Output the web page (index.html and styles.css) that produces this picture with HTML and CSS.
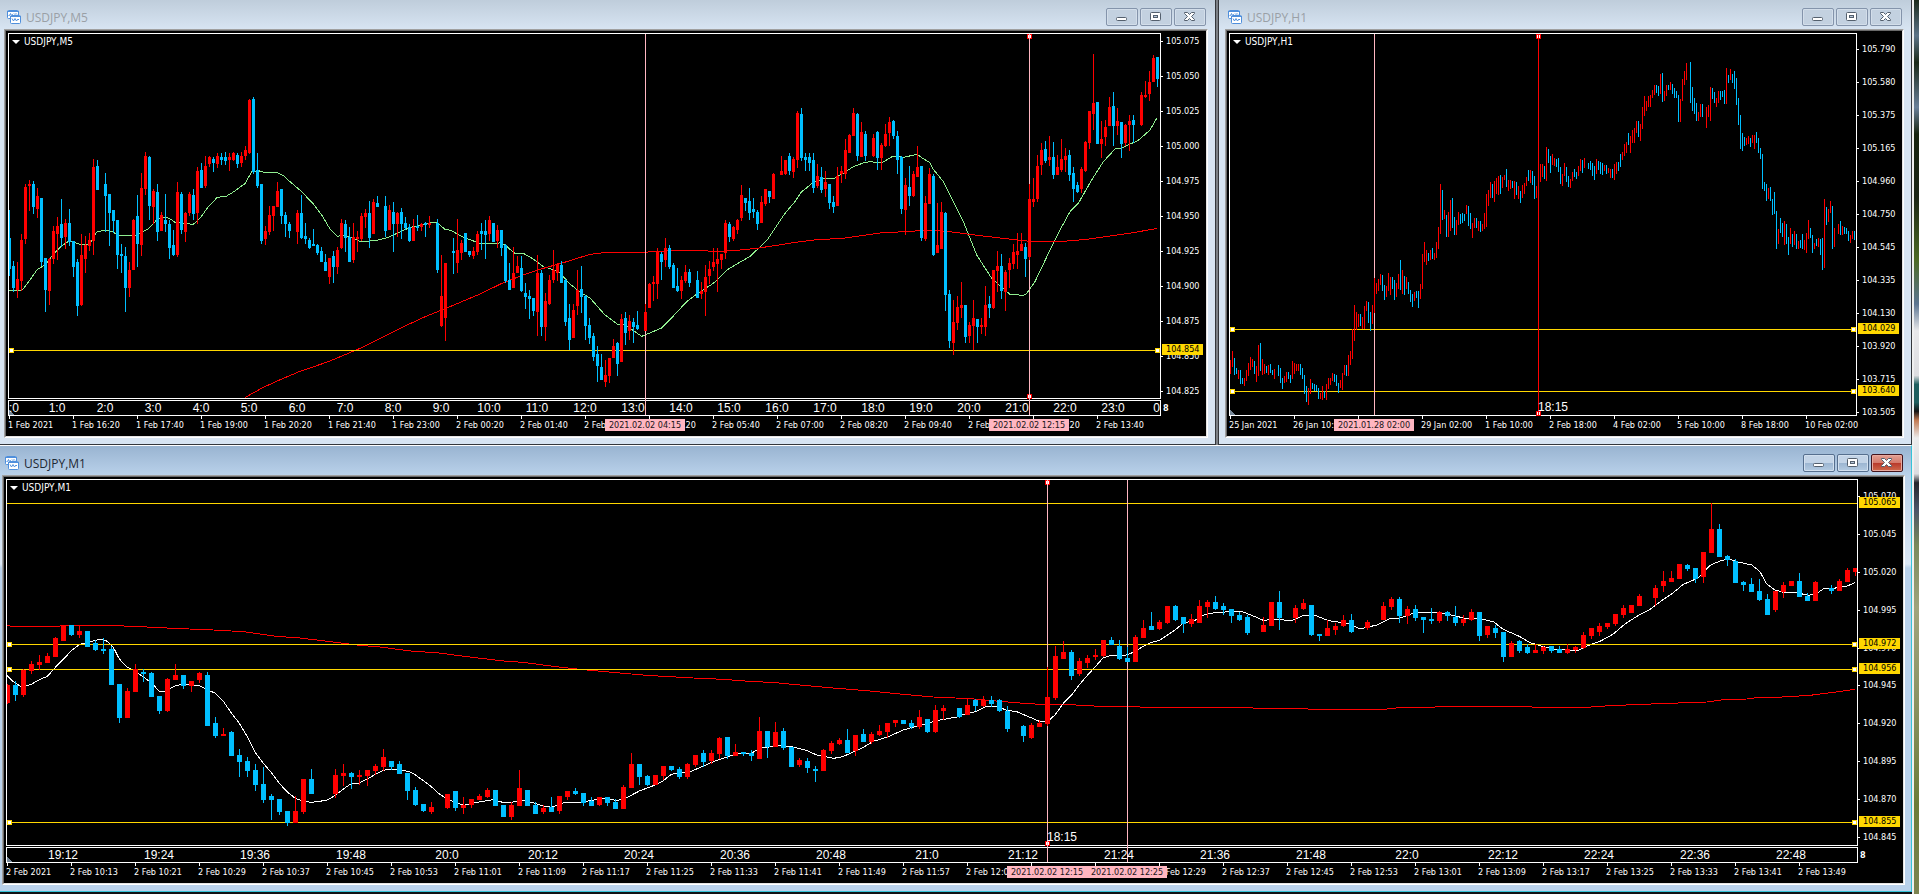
FILE: index.html
```html
<!DOCTYPE html>
<html lang="en">
<head>
<meta charset="utf-8">
<title>USDJPY charts</title>
<link rel="stylesheet" href="styles.css">
</head>
<body>
<svg class="defs" aria-hidden="true">
  <symbol id="icon-chart" viewBox="0 0 14 14">
    <rect x="0.5" y="0.5" width="11" height="8" rx="1" fill="#fff" stroke="#4f8fdc"/>
    <path d="M0 1.5h12" stroke="#4f8fdc"/>
    <path d="M1.5 5.5h1l1-2 1 2 1-1 1 1M7 3.5l1 1 1-1 1 1" fill="none" stroke="#4f8fdc"/>
    <rect x="3.5" y="5.5" width="10" height="8" rx="1" fill="#fff" stroke="#4f8fdc"/>
    <path d="M3 6.5h11" stroke="#4f8fdc"/>
    <path d="M5 8.500l1.500 2.500 1.500-2.500 1.500 2.500 1.500-2 1 1" fill="none" stroke="#4f8fdc"/>
  </symbol>
  <symbol id="icon-min" viewBox="0 0 14 12">
    <rect x="1.5" y="6.5" width="10" height="3" rx="1" fill="#fff" stroke="#54606e"/>
  </symbol>
  <symbol id="icon-max" viewBox="0 0 14 12">
    <rect x="1.5" y="1.5" width="10" height="8" rx="1" fill="#fff" stroke="#54606e"/>
    <rect x="4.5" y="4.5" width="4" height="2" fill="#b8c8da" stroke="#54606e"/>
  </symbol>
  <symbol id="icon-close" viewBox="0 0 14 12">
    <path d="M1.5 1.5h3l2 2 2-2h3v1L8.500 5.500l3 3v1h-3l-2-2-2 2h-3v-1l3-3-3-3z" fill="#fff" stroke="#54606e"/>
  </symbol>
</svg>

<main class="desktop">
  <section class="window m5">
    <header class="titlebar">
      <svg class="app-icon" aria-hidden="true"><use href="#icon-chart"/></svg>
      <h1 class="caption">USDJPY,M5</h1>
      <div class="controls">
        <button type="button" aria-label="Minimize"><svg><use href="#icon-min"/></svg></button>
        <button type="button" aria-label="Restore"><svg><use href="#icon-max"/></svg></button>
        <button type="button" aria-label="Close"><svg><use href="#icon-close"/></svg></button>
      </div>
    </header>
    <div class="client">
      <div class="chart" data-chart="m5">
        <div class="plot">
          <svg class="series" preserveAspectRatio="none"></svg>
          <p class="symbol">USDJPY,M5</p>
          <div class="hours">
            <span>:0</span><span>1:0</span><span>2:0</span><span>3:0</span><span>4:0</span><span>5:0</span><span>6:0</span><span>7:0</span><span>8:0</span><span>9:0</span><span>10:0</span><span>11:0</span><span>12:0</span><span>13:0</span><span>14:0</span><span>15:0</span><span>16:0</span><span>17:0</span><span>18:0</span><span>19:0</span><span>20:0</span><span>21:0</span><span>22:0</span><span>23:0</span><span>0</span>
          </div>
        </div>
        <div class="prices">
          <span>105.075</span><span>105.050</span><span>105.025</span><span>105.000</span><span>104.975</span><span>104.950</span><span>104.925</span><span>104.900</span><span>104.875</span><span>104.850</span><span>104.825</span>
        </div>
        <div class="price-tags"><b class="scale-mark">8</b></div>
        <div class="times">
          <span>1 Feb 2021</span><span>1 Feb 16:20</span><span>1 Feb 17:40</span><span>1 Feb 19:00</span><span>1 Feb 20:20</span><span>1 Feb 21:40</span><span>1 Feb 23:00</span><span>2 Feb 00:20</span><span>2 Feb 01:40</span><span>2 Feb 03:00</span><span>2 Feb 04:20</span><span>2 Feb 05:40</span><span>2 Feb 07:00</span><span>2 Feb 08:20</span><span>2 Feb 09:40</span><span>2 Feb 11:00</span><span>2 Feb 12:20</span><span>2 Feb 13:40</span>
        </div>
      </div>
    </div>
  </section>

  <section class="window h1">
    <header class="titlebar">
      <svg class="app-icon" aria-hidden="true"><use href="#icon-chart"/></svg>
      <h1 class="caption">USDJPY,H1</h1>
      <div class="controls">
        <button type="button" aria-label="Minimize"><svg><use href="#icon-min"/></svg></button>
        <button type="button" aria-label="Restore"><svg><use href="#icon-max"/></svg></button>
        <button type="button" aria-label="Close"><svg><use href="#icon-close"/></svg></button>
      </div>
    </header>
    <div class="client">
      <div class="chart" data-chart="h1">
        <div class="plot">
          <svg class="series" preserveAspectRatio="none"></svg>
          <p class="symbol">USDJPY,H1</p>
        </div>
        <div class="prices">
          <span>105.790</span><span>105.580</span><span>105.375</span><span>105.165</span><span>104.960</span><span>104.750</span><span>104.545</span><span>104.335</span><span>104.130</span><span>103.920</span><span>103.715</span><span>103.505</span>
        </div>
        <div class="price-tags"></div>
        <div class="times">
          <span>25 Jan 2021</span><span>26 Jan 10:00</span><span></span><span>29 Jan 02:00</span><span>1 Feb 10:00</span><span>2 Feb 18:00</span><span>4 Feb 02:00</span><span>5 Feb 10:00</span><span>8 Feb 18:00</span><span>10 Feb 02:00</span>
        </div>
      </div>
    </div>
  </section>

  <section class="window m1 active">
    <header class="titlebar">
      <svg class="app-icon" aria-hidden="true"><use href="#icon-chart"/></svg>
      <h1 class="caption">USDJPY,M1</h1>
      <div class="controls">
        <button type="button" aria-label="Minimize"><svg><use href="#icon-min"/></svg></button>
        <button type="button" aria-label="Restore"><svg><use href="#icon-max"/></svg></button>
        <button type="button" class="close" aria-label="Close"><svg><use href="#icon-close"/></svg></button>
      </div>
    </header>
    <div class="client">
      <div class="chart" data-chart="m1">
        <div class="plot">
          <svg class="series" preserveAspectRatio="none"></svg>
          <p class="symbol">USDJPY,M1</p>
          <div class="hours">
            <span>19:12</span><span>19:24</span><span>19:36</span><span>19:48</span><span>20:0</span><span>20:12</span><span>20:24</span><span>20:36</span><span>20:48</span><span>21:0</span><span>21:12</span><span>21:24</span><span>21:36</span><span>21:48</span><span>22:0</span><span>22:12</span><span>22:24</span><span>22:36</span><span>22:48</span>
          </div>
        </div>
        <div class="prices">
          <span>105.070</span><span>105.045</span><span>105.020</span><span>104.995</span><span>104.970</span><span>104.945</span><span>104.920</span><span>104.895</span><span>104.870</span><span>104.845</span>
        </div>
        <div class="price-tags"><b class="scale-mark">8</b></div>
        <div class="times">
          <span>2 Feb 2021</span><span>2 Feb 10:13</span><span>2 Feb 10:21</span><span>2 Feb 10:29</span><span>2 Feb 10:37</span><span>2 Feb 10:45</span><span>2 Feb 10:53</span><span>2 Feb 11:01</span><span>2 Feb 11:09</span><span>2 Feb 11:17</span><span>2 Feb 11:25</span><span>2 Feb 11:33</span><span>2 Feb 11:41</span><span>2 Feb 11:49</span><span>2 Feb 11:57</span><span>2 Feb 12:05</span><span></span><span></span><span>2 Feb 12:29</span><span>2 Feb 12:37</span><span>2 Feb 12:45</span><span>2 Feb 12:53</span><span>2 Feb 13:01</span><span>2 Feb 13:09</span><span>2 Feb 13:17</span><span>2 Feb 13:25</span><span>2 Feb 13:33</span><span>2 Feb 13:41</span><span>2 Feb 13:49</span>
        </div>
      </div>
    </div>
  </section>
</main>
<script src="charts.js"></script>
</body>
</html>
```

FILE: styles.css
```css
* { box-sizing: border-box; }

body {
  margin: 0;
  font-family: "DejaVu Sans Condensed", "DejaVu Sans", sans-serif;
  font-size: 9px;
  line-height: 11px;
  background: #16181a;
}

.defs { position: absolute; width: 0; height: 0; }

/* Desktop: two windows above, one below, wallpaper showing on the right */
.desktop {
  display: grid;
  grid-template-columns: minmax(0, 1216fr) minmax(0, 694fr);
  grid-template-rows: minmax(300px, 445fr) minmax(300px, 447fr);
  column-gap: 2px;
  min-height: 100vh;
  padding: 0 7px 2px 0;
  background:
    linear-gradient(#f0f0f0, #f0f0f0) right 5px top / 2px 100% no-repeat,
    linear-gradient(to bottom, #1d2b1c 0, #5d7488 4%, #1b2a18 7%, #6a8099 12%, #17240f 15%, #1c2616 22%, #4d6a24 29%, #5c7591 34%, #e8e8ea 37%, #dddde0 42%, #1f5f5f 43%, #1f5f5f 45%, #141414 46%, #c07850 47%, #ececec 49%, #dcdce0 53%, #24262c 54%, #4c5468 57%, #7a8a5c 61%, #a0a47c 68%, #8c9464 78%, #6c7c38 90%, #7c8450 100%) right / 5px 100% no-repeat,
    linear-gradient(#101214, #101214) left bottom / 100% 2px no-repeat,
    #7c8086;
}

.window {
  display: grid;
  grid-template-rows: 29px minmax(0, 1fr);
  min-width: 0;
  background: linear-gradient(to bottom, #bfcddb 0, #d7e4f2 29px);
  border: 0 solid #34373c;
}
.m5 { padding: 0 7px 6px 4px; border-width: 0 1px 1px 0; }
.h1 { padding: 0 7px 6px 6px; border-width: 0 1px 1px 1px; }
.m1 {
  grid-column: 1 / -1;
  padding: 0 6px 6px 2px;
  border-width: 1px;
  border-left-width: 0;
  border-color: #fff #35c3d8 #35c3d8;
}
.active {
  background: linear-gradient(to bottom, #99b4d1 0, #b9d1ea 29px, #dce8f5 118px, #b9d1ea 122px);
}

.titlebar { display: flex; align-items: flex-start; padding: 8px 2px 0 3px; }
.app-icon { width: 14px; height: 14px; margin: 2px 5px 0 0; }
.caption {
  flex: 1;
  margin: 0;
  font: 400 12px/19px "Open Sans", "Noto Sans", sans-serif;
  color: #9aa0a6;
}
.active .caption { color: #1e2833; }

.controls { display: flex; gap: 2px; }
.controls button {
  display: grid;
  place-items: center;
  width: 32px;
  height: 18px;
  padding: 0;
  border: 1px solid #8494ab;
  border-radius: 2px;
  background: #c3d1e0;
  box-shadow: inset 0 0 0 1px #d3deea;
}
.controls svg { width: 14px; height: 12px; }
.active .controls button {
  border-color: #566f8e;
  background: linear-gradient(#c3d4e7 0 50%, #9bb5d1 50%, #b4cbe2);
  box-shadow: inset 0 0 0 1px #d2e0ef;
}
.active .controls .close {
  border-color: #43141c;
  background: linear-gradient(#e3a093 0, #d4796a 50%, #b8382a 50%, #cf6a4c);
  box-shadow: inset 0 0 0 1px #e8a99e;
}

.client {
  min-height: 0;
  border: 1px solid;
  border-color: #a0a0a0 #fff #fff #a0a0a0;
  background: #000;
}
.chart {
  display: grid;
  grid-template-columns: minmax(0, 1fr) 45px;
  grid-template-rows: minmax(0, 1fr) 20px;
  height: 100%;
  padding: 2px 0 0 2px;
  border: 1px solid;
  border-color: #696969 #e3e3e3 #e3e3e3 #696969;
  color: #fff;
  overflow: hidden;
}

.plot { grid-area: 1 / 1; position: relative; min-width: 0; }
.series { position: absolute; inset: 0; width: 100%; height: 100%; shape-rendering: crispEdges; }

.symbol {
  position: absolute;
  top: 3px;
  left: 4px;
  display: flex;
  align-items: center;
  gap: 4px;
  margin: 0;
  font-size: 10px;
}
.symbol::before {
  content: "";
  border: 4px solid transparent;
  border-top-color: #fff;
  border-bottom: 0;
}

/* Strip of local hours under the price plot */
.hours {
  position: absolute;
  inset: auto 1px 1px 1px;
  display: flex;
  overflow: hidden;
  font: 12px/14px "Liberation Sans", Arial, sans-serif;
}
.hours span { flex: 0 0 auto; text-align: center; white-space: nowrap; }
.m5 .hours span { width: calc(100% * 48 / 1151); }
.m5 .hours span:first-child { width: calc(100% * 24 / 1151); text-align: left; }
.m5 .hours span:last-child { flex: 1; text-align: right; }
.m1 .hours { padding-left: 8px; }
.m1 .hours span { width: calc(100% * 96 / 1842); }

.prices {
  grid-area: 1 / 2 / 3 / 3;
  display: flex;
  flex-direction: column;
  justify-content: space-between;
}
.prices span {
  padding-left: 5px;
  background: linear-gradient(#fff, #fff) 0 50% / 2px 1px no-repeat;
}
.m5 .prices { padding: 3px 0 39px; }
.h1 .prices { padding: 11px 0 18px; }
.m1 .prices { padding: 12px 0 40px; }

.price-tags { grid-area: 1 / 2; position: relative; }
.price-tag {
  position: absolute;
  left: 1px;
  width: 41px;
  padding-left: 4px;
  margin-top: -6px;
  background: #ffd700;
  color: #000;
}
.scale-mark { position: absolute; bottom: 2px; left: 2px; }

.times { grid-area: 2 / 1; position: relative; display: flex; min-width: 0; padding-left: 1px; }
.times > span {
  flex: 0 0 auto;
  padding-top: 4px;
  text-indent: -1px;
  white-space: nowrap;
  background: linear-gradient(#fff, #fff) 0 0 / 1px 3px no-repeat;
}
.m5 .times > span { width: calc(100% * 64 / 1152); }
.h1 .times > span { width: calc(100% * 64 / 627); }
.m1 .times > span { width: calc(100% * 64 / 1851); }
.time-tag {
  position: absolute;
  top: 3px;
  width: 80px;
  height: 12px;
  padding-top: 1px;
  margin-left: -40px;
  background: #ffb6c1;
  color: #201418;
  text-align: center;
  white-space: nowrap;
}

.note {
  position: absolute;
  font: 12px/14px "Liberation Sans", Arial, sans-serif;
}
.h1 .note { bottom: 2px; }
.m1 .note { bottom: 19px; }
```

FILE: charts.js
```js
// Chart space uses three units per device pixel. Each candle is
// colour + high,open/close top,open/close bottom,low; "-" is a missing bar.
const charts = {
  m5: {
    box: [24, 99, 3459, 1149], x0: 28, step: 12, body: 9, strip: 1194,
    hlines: [{ y: 1051, label: "104.854", handles: true }],
    vlines: [
      { x: 1936, color: "#ffb6c1", tag: "2021.02.02 04:15" },
      { x: 3088, color: "#ffb6c1", tag: "2021.02.02 12:15", handles: true }
    ],
    averages: [
      ["#90ee90", "28,871 66,871 90,840 112,808 135,795 160,762 185,738 208,722 240,733 270,732 290,696 315,690 335,694 355,706 410,706 445,686 470,660 490,651 508,655 525,667 580,673 600,655 625,620 652,592 680,588 700,576 736,550 755,515 775,512 800,519 830,517 850,527 870,545 905,575 940,612 965,645 990,687 1012,709 1030,706 1060,715 1084,726 1130,721 1165,712 1200,696 1230,682 1260,677 1295,667 1312,668 1335,688 1352,691 1390,712 1440,730 1500,729 1515,735 1543,759 1572,761 1600,777 1630,800 1675,814 1710,852 1745,880 1770,894 1815,945 1852,972 1875,974 1925,1009 1985,984 2020,948 2060,905 2090,882 2140,850 2185,807 2250,769 2300,722 2355,640 2385,605 2403,577 2440,547 2470,536 2505,534 2530,520 2560,500 2590,489 2610,485 2645,489 2680,468 2710,472 2752,463 2765,473 2790,488 2800,508 2830,545 2860,605 2890,665 2930,765 2975,835 3015,870 3030,883 3055,884 3065,888 3078,883 3105,845 3150,750 3180,690 3210,635 3235,610 3275,540 3310,485 3345,447 3365,444 3415,421 3450,390 3470,355"],
      ["#ff0000", "736,1192 790,1162 850,1135 900,1114 985,1085 1040,1062 1080,1045 1200,985 1280,948 1350,920 1440,882 1510,848 1570,825 1630,805 1700,785 1770,763 1820,757 1920,759 1960,754 2070,751 2150,754 2200,752 2270,745 2330,736 2400,725 2460,718 2520,716 2640,699 2800,690 2850,695 2900,702 3000,714 3080,723 3200,723 3260,718 3330,708 3400,698 3472,685"]
    ],
    candles: `b630,714,806,827 b783,798,863,875 r786,837,869,893 r702,720,843,872 r552,561,716,731 r540,552,557,632 b543,552,620,641 r564,588,626,653 b594,594,786,798 b774,774,869,935
r774,777,872,914 r678,692,777,791 r651,678,702,780 b597,672,713,740 r657,669,710,746 b627,669,725,737 b723,723,800,830 b777,786,917,947 r702,765,914,917 r708,735,776,818
r699,720,737,753 r477,501,722,764 b480,498,569,569 - b519,552,587,695 b582,582,638,738 b630,630,662,698 b660,660,764,806 b732,762,767,818 b741,768,863,935
r786,810,863,890 r657,660,809,809 b585,648,731,800 r519,564,734,767 r456,468,566,584 b468,471,617,659 r567,573,620,671 b552,576,695,722 r636,645,692,692 b582,660,671,695
b660,672,743,776 b690,735,764,767 r546,576,764,770 b576,582,689,701 r636,639,695,725 r576,582,638,647 b567,585,641,659 r501,513,638,671 b489,510,563,563 r468,498,557,563
r468,471,491,500 b471,477,488,515 r459,468,491,503 b459,471,479,494 b456,471,482,494 r459,471,479,512 r456,459,479,482 b459,465,491,503 r456,468,488,500 r438,450,467,479
r297,300,458,461 b291,297,515,521 b459,510,557,563 b552,552,722,731 r678,693,716,734 r618,645,695,704 r618,618,647,692 r546,573,620,620 b567,567,647,671 b636,645,671,710
b666,672,692,713 - r630,639,695,731 b585,639,713,716 b669,708,716,731 b714,720,743,746 b687,732,737,737 b732,735,758,764 b741,753,785,785 b762,786,812,812
r774,774,830,851 b753,768,800,848 r741,750,800,821 r657,669,743,746 b660,672,713,755 b681,711,785,785 r669,711,779,788 r693,711,716,755 r639,648,716,722 r627,639,650,683
b603,639,713,743 r597,606,701,701 b588,609,620,620 - b588,618,692,710 r615,630,689,689 b606,636,671,755 r636,639,671,710 b624,636,671,716 b651,669,683,689
b672,681,722,725 r657,681,722,722 b645,678,683,692 r669,672,680,692 b666,669,674,710 r648,669,674,683 - b657,669,809,818 r765,888,977,980 r789,789,953,1022
- b714,753,758,821 r657,750,788,818 r720,729,758,779 b699,699,755,755 b753,753,764,770 r741,753,767,776 r693,702,755,764 b669,693,701,749 b660,693,704,776
r648,660,701,722 b669,669,725,725 r675,690,722,743 b690,690,743,767 b732,735,842,848 b789,840,869,869 r741,819,863,863 r768,798,818,818 b768,804,872,875 b849,879,890,926
b870,888,896,956 b894,894,932,947 r765,819,935,1007 b810,819,980,1007 r879,903,980,1022 r825,840,911,914 r750,810,839,848 r789,795,818,842 b783,795,848,848 b837,840,965,977
b912,954,1019,1049 r912,930,1013,1013 r810,870,917,944 b798,867,890,938 b885,888,977,1019 b954,975,1013,1031 b999,1008,1070,1082 b1038,1062,1097,1145 b1062,1101,1139,1139 r1080,1125,1145,1160
r1074,1074,1127,1148 r1017,1038,1073,1073 b1026,1029,1091,1127 r942,957,1085,1085 b936,954,998,1034 r945,963,992,1019 b954,966,980,1028 b933,975,986,989 - r912,936,992,992
r849,852,923,923 r828,846,851,902 r744,753,851,896 b756,762,785,839 r714,744,779,800 b735,744,800,806 b789,795,863,863 b804,858,872,875 r828,840,872,896 r795,816,842,848
b807,816,848,860 - b813,840,893,893 r846,873,881,896 r795,831,875,947 r783,807,827,851 r744,786,800,812 r744,777,791,875 r762,762,779,806 r660,669,758,776
b666,672,710,725 r678,681,716,722 r657,660,689,701 r555,585,653,662 b594,594,608,632 b564,603,638,659 b594,627,635,653 b630,636,671,689 r588,606,668,668 r567,567,611,617
b573,573,590,608 r519,522,596,596 - r468,513,524,524 r480,480,521,524 b459,468,512,524 r471,477,515,533 r333,339,479,503 b324,342,473,482 b459,471,479,512
b459,471,488,512 b459,480,563,578 r492,528,557,563 b501,531,569,578 r513,546,566,590 b552,552,608,626 b588,606,620,638 r501,528,617,617 r498,513,521,548 r417,450,521,536
r402,405,458,458 r324,339,407,407 b339,342,467,482 r366,396,470,470 b393,402,467,482 - r402,414,467,470 b393,396,473,509 r429,435,473,509 r372,402,437,440
r351,366,398,437 b360,363,407,416 b393,408,479,521 b468,471,626,641 r534,555,629,704 b498,561,587,617 r513,522,587,590 r438,501,530,530 b498,498,713,722 r588,609,716,722
r504,522,611,611 b522,528,764,767 r609,735,758,758 r606,636,746,746 b636,639,884,932 b870,882,1022,1043 r900,966,1028,1064 r888,921,968,989 r846,915,923,953 b915,915,1010,1028
r966,975,1007,1028 r900,954,977,1049 b957,957,980,1028 r954,975,980,1001 r858,915,980,1007 b888,912,923,953 r810,810,923,926 r753,798,812,875 b762,798,872,896 r810,816,875,932
r774,789,809,863 r732,756,791,806 r699,753,764,806 r699,732,752,752 b729,741,776,830 r552,597,770,779 r534,597,605,620 r465,498,596,605 r429,450,494,524 b423,447,482,488
r408,471,479,497 b426,471,524,536 r465,501,524,524 r417,477,509,515 r444,468,479,515 b450,465,524,542 b501,519,566,605 b546,555,575,578 r501,507,566,578 r423,426,512,515
r333,333,428,446 r162,309,341,389 b306,306,431,431 r363,417,431,473 r360,381,410,437 r291,321,377,377 b276,318,377,437 r324,363,377,404 b366,366,431,473 r372,375,428,437
r345,363,374,452 b345,360,374,428 - r276,285,374,377 r243,285,290,293 r213,246,281,302 r165,174,245,245 b171,171,236,260`
  },

  // Zoomed out far enough that bars are bare high-low lines.
  h1: {
    box: [57, 99, 1884, 1149], x0: 61, step: 6, body: 3,
    hlines: [
      { y: 988, label: "104.029", handles: true },
      { y: 1174, label: "103.640", handles: true }
    ],
    vlines: [
      { x: 493, color: "#ffb6c1", tag: "2021.01.28 02:00" },
      { x: 985, color: "#ff0000", note: "18:15", handles: true }
    ],
    averages: [],
    candles: `r1080,1121 r1053,1101 b1074,1125 b1104,1122 r1110,1137 b1110,1152 b1134,1152 r1134,1158 r1110,1143 r1089,1128 r1071,1110 r1077,1101 b1083,1122 r1098,1146 r1035,1128 b1029,1113
r1077,1125 r1092,1122 b1098,1119 r1095,1125 b1092,1119 b1110,1125 r1107,1137 - b1095,1128 b1104,1149 b1134,1167 r1128,1149 r1116,1146 b1116,1137 b1125,1149 r1083,1137
r1089,1122 r1092,1113 r1092,1113 b1092,1125 b1104,1137 b1125,1182 b1158,1206 r1164,1215 r1137,1182 b1149,1167 b1152,1173 b1155,1173 b1164,1197 r1179,1197 r1158,1200 b1173,1194
r1152,1200 r1134,1167 r1134,1155 r1119,1143 b1122,1146 b1125,1158 b1149,1179 r1140,1164 r1119,1170 r1095,1125 b1095,1128 r1065,1128 r1053,1095 r987,1077 r915,1023 r936,990
r942,981 b942,978 r951,987 r918,987 r903,933 b906,969 b936,993 r915,972 r834,939 r849,882 r837,873 r822,855 b825,873 b855,900 r858,891 r819,873
r831,885 b831,867 b840,900 r849,891 r822,867 b780,870 r810,882 b828,885 r831,867 b846,882 b870,906 b882,921 r876,903 b873,894 b873,924 r852,897
r762,867 r726,786 r750,795 b759,783 r750,780 b744,777 r759,780 r726,774 r681,747 r552,702 b570,660 r630,657 b645,711 r636,711 r600,693 b594,684
b651,705 r660,705 r636,675 b642,672 b639,669 b642,663 r615,642 b618,678 b639,687 r669,714 r654,684 b654,684 r663,693 b663,696 r672,693 r639,687
r582,681 r570,618 r546,594 b552,594 r543,606 r534,582 r528,585 b525,582 r531,564 r525,540 b507,561 r540,573 r540,567 b543,564 r543,597 b546,585
r558,597 b573,609 r555,594 r549,582 r531,558 b510,543 r510,549 b513,555 b528,597 r558,594 - r492,546 r492,531 b498,537 r441,543 b447,489
b468,519 r462,495 r474,498 b477,501 b474,516 b501,552 r522,558 r489,528 b501,546 b528,561 r537,564 r516,543 b507,531 b516,537 r498,528 r477,513
b480,519 r474,504 - b489,507 b483,510 b489,528 b498,540 r477,522 b483,510 b486,522 b489,525 r495,513 b495,522 r504,519 r507,534 b507,534
r492,540 r486,522 b486,513 b462,501 r456,480 r432,468 r426,459 b399,435 r408,459 r390,429 r384,429 r363,399 b363,411 r372,423 r321,387 r288,348
r303,333 r288,321 r285,321 r270,294 r255,285 b255,279 b258,288 r222,282 b219,306 r273,303 r255,288 b255,270 r246,270 b252,282 b264,294 b273,294
b285,366 r297,366 r237,303 r213,255 r189,240 - b186,309 b261,333 b294,342 b309,363 r336,363 r312,351 b312,351 - r321,384 r315,351
r261,363 b264,297 b276,309 r294,321 r273,309 b273,300 b273,291 b270,312 r204,312 b225,249 r207,240 b222,249 b213,267 b234,315 b294,375 b345,447
b399,453 b411,438 r414,435 r408,432 b414,441 r405,429 r405,447 b396,429 b414,459 b444,477 b462,567 b546,573 b552,603 r564,597 b561,603 b597,645
b576,642 b633,747 r687,732 b654,699 b669,711 r663,735 b672,732 b711,765 r684,732 b702,741 r693,735 b702,747 r723,747 b720,744 b702,747 r720,750
r699,759 r660,717 b684,714 b705,759 r729,747 b717,738 r714,741 b717,765 b714,810 r597,804 b621,675 r627,666 r603,639 b618,747 r684,741 -
r672,702 b663,705 r678,705 b681,702 b684,702 b693,723 r705,729 r693,717 b693,720`
  },

  m1: {
    box: [18, 117, 5556, 1152], x0: 22, step: 24, body: 15, strip: 1216,
    hlines: [
      { y: 190, label: "105.065" },
      { y: 613, label: "104.972", handles: true },
      { y: 688, label: "104.956", handles: true },
      { y: 1147, label: "104.855", handles: true }
    ],
    vlines: [
      { x: 3142, color: "#ffb6c1", tag: "2021.02.02 12:15", note: "18:15", handles: true },
      { x: 3382, color: "#ffb6c1", tag: "2021.02.02 12:25" }
    ],
    averages: [
      ["#ff0000", "22,557 37,559 178,559 182,556 322,556 420,560 520,565 640,570 730,575 830,589 900,594 1000,606 1080,616 1140,621 1240,634 1310,638 1400,650 1520,664 1570,667 1660,679 1740,688 1860,699 1940,706 2080,714 2170,718 2260,725 2315,727 2400,735 2500,744 2600,752 2700,762 2800,771 2910,776 3000,784 3060,789 3120,793 3190,793 3300,799 3400,800 3440,802 3755,802 3760,805 3920,805 3925,808 4160,808 4165,805 4235,802 4380,800 4590,800 4600,802 4760,802 4830,797 4980,791 5120,786 5170,779 5240,777 5270,773 5330,772 5430,766 5500,757 5566,748"],
      ["#ffffff", "22,707 40,725 60,738 75,739 95,732 118,719 142,709 166,682 190,658 214,632 238,614 262,607 290,600 305,597 320,603 340,622 358,657 382,682 406,694 430,711 454,728 478,754 495,754 526,737 550,733 574,736 598,737 622,749 646,760 670,784 694,819 718,850 742,890 766,938 790,970 814,998 838,1030 862,1056 886,1075 910,1083 934,1087 980,1081 1006,1066 1030,1047 1054,1031 1078,1029 1102,1017 1126,1003 1150,991 1174,987 1200,990 1225,994 1245,1004 1270,1022 1294,1040 1318,1062 1342,1077 1390,1096 1430,1087 1480,1079 1508,1087 1540,1086 1560,1080 1580,1084 1606,1090 1630,1098 1655,1102 1680,1091 1705,1086 1750,1086 1775,1081 1820,1075 1850,1082 1880,1073 1920,1052 1966,1035 1990,1022 2014,1003 2040,999 2065,998 2110,978 2150,961 2182,951 2215,940 2254,940 2270,930 2290,923 2340,917 2380,921 2420,931 2450,945 2475,950 2500,955 2520,952 2545,943 2590,922 2620,904 2660,892 2710,870 2760,856 2810,842 2870,831 2900,820 2928,815 2955,801 2990,798 3020,811 3050,815 3095,834 3120,845 3142,845 3165,825 3190,790 3215,765 3235,738 3262,706 3286,680 3310,653 3335,646 3370,648 3400,637 3425,622 3450,609 3480,600 3525,570 3550,549 3585,541 3615,523 3650,517 3725,514 3760,528 3790,541 3830,537 3860,541 3880,540 3910,526 3950,528 3985,542 4030,548 4050,552 4080,567 4130,555 4170,535 4200,534 4240,520 4265,517 4310,517 4350,524 4395,535 4440,536 4480,545 4510,568 4560,590 4590,608 4630,620 4670,629 4735,631 4760,618 4800,604 4840,582 4875,552 4920,523 4950,508 4985,482 5020,458 5050,433 5095,414 5130,376 5160,363 5185,357 5215,366 5255,375 5280,395 5300,432 5325,450 5350,457 5390,458 5425,466 5450,460 5470,447 5500,445 5540,439 5566,427"]
    ],
    candles: `r732,735,788,791 b723,735,764,782 r687,690,764,770 r663,672,692,701 r645,666,674,689 r639,648,668,668 r591,594,650,650 r555,558,602,602 b555,555,584,587 r558,573,584,593
b573,573,620,620 b600,609,629,632 b594,627,632,641 b618,627,734,734 b732,732,833,848 r744,753,833,833 r672,687,755,755 b687,696,701,725 b696,699,770,770 b768,768,812,821
r714,717,812,815 r672,705,719,719 b705,705,737,746 r723,723,737,755 r696,699,719,728 b696,705,857,857 b831,849,887,893 r864,882,887,887 b873,876,947,947 b927,945,965,1010
b951,963,992,1010 b972,990,1034,1052 b981,1032,1079,1088 b1062,1068,1079,1139 b1077,1077,1115,1124 b1113,1113,1148,1157 r1068,1113,1148,1148 r1017,1017,1115,1121 b987,1017,1061,1061 -
- r987,1005,1061,1073 r972,999,1007,1037 b996,999,1010,1046 r990,1005,1010,1034 r990,990,1007,1037 r972,978,992,1004 r927,951,980,992 b963,963,980,989 b963,972,1001,1001
b999,999,1052,1079 b1041,1050,1094,1097 b1092,1092,1112,1115 r1086,1101,1115,1121 - r1062,1062,1103,1106 b1053,1053,1103,1112 r1071,1095,1103,1121 r1077,1077,1094,1103 r1062,1068,1079,1079
r1044,1050,1070,1073 b1050,1050,1097,1097 b1095,1095,1130,1130 r1086,1095,1130,1139 r990,1044,1097,1097 b1050,1050,1097,1097 b1086,1095,1121,1121 r1095,1104,1115,1121 b1071,1101,1115,1115 r1068,1068,1112,1121
r1053,1053,1070,1079 b1044,1053,1061,1064 b1059,1059,1088,1097 b1071,1083,1097,1097 r1071,1071,1094,1097 b1071,1071,1088,1097 b1077,1086,1106,1106 r1035,1041,1106,1106 r939,972,1043,1043 b972,972,1010,1034
b1005,1008,1034,1037 r1005,1005,1034,1034 r978,978,1007,1019 b978,978,989,992 b981,987,1010,1016 r969,972,1010,1016 r945,945,974,980 b930,939,965,980 r930,939,962,971 r891,894,941,956
b891,891,947,956 r912,936,947,947 b936,936,941,947 b930,939,947,962 r831,873,956,956 b873,873,920,953 r846,876,920,920 b864,873,923,929 b921,921,980,980 r954,960,974,980
b954,963,983,998 b978,987,992,1025 r927,930,992,992 r903,909,932,941 r894,900,911,914 b867,900,938,938 r885,885,932,947 b867,882,905,905 r876,882,905,911 r855,873,884,887
r849,849,875,893 r840,840,848,860 b840,840,851,851 b840,849,860,866 r810,831,860,866 b837,837,875,878 r795,810,875,878 r795,804,812,839 - b804,804,830,833
r777,795,824,824 b777,780,797,812 r768,780,797,800 b768,780,791,800 b777,780,812,815 b798,813,866,875 - b855,858,887,905 r849,855,893,896 r840,849,860,860
r681,771,851,857 r618,648,773,779 r603,636,656,656 b630,636,707,719 r654,663,701,707 r645,654,668,683 r627,645,650,659 r600,600,647,650 b591,600,614,614 b600,618,656,659
b621,654,665,665 r585,591,665,665 r540,564,593,593 b516,558,569,569 r540,546,566,569 r498,498,548,551 b495,498,539,542 b531,531,551,578 r522,537,551,560 r480,498,548,548
r480,486,500,533 b468,486,506,509 b489,498,509,524 b507,507,527,548 b516,525,539,542 b525,531,578,584 - r531,555,575,575 r486,486,557,557 b453,486,533,569
- r495,504,533,548 r477,489,506,509 b495,495,584,587 b582,582,587,602 r540,564,587,587 r549,558,569,584 r525,540,557,560 b522,540,575,578 -
r540,546,563,569 - r486,498,539,539 r471,477,500,509 b471,477,527,548 r498,507,527,551 b495,507,533,542 b531,531,539,578 b504,537,542,551 r513,516,542,548
b513,516,527,542 b498,531,548,557 r525,537,548,557 r507,516,539,542 b516,516,587,602 r558,558,584,593 b555,564,578,593 b576,576,650,665 r603,609,650,650 b600,603,632,638
b612,621,638,641 r612,630,638,638 r618,621,632,641 b618,618,632,638 b618,627,638,638 r612,627,638,641 r618,621,629,638 r576,585,623,626 r564,564,587,596 r549,558,575,587
r549,549,560,566 r522,522,551,557 r495,504,524,533 r495,495,518,518 r462,468,497,497 - r435,444,473,497 r393,423,437,455 r393,414,425,425 r372,372,416,416
b372,375,386,392 b384,384,416,428 r336,336,410,428 r189,267,338,338 b252,267,350,350 b345,348,359,377 b357,363,428,428 b423,426,434,452 b414,432,455,455 b417,453,479,482
b462,477,524,524 r453,453,509,515 r426,435,455,473 r423,423,437,437 b399,423,470,470 b459,468,482,482 r423,426,482,482 - b435,444,452,461 r417,423,452,452
r384,390,425,425 r384,384,395,407`
  }
};

const PX = 3;
const FILL = { r: "#ff0000", b: "#00bfff" };
const snap = v => Math.round(v / PX) * PX;
const cell = v => Math.floor(v / PX) * PX;
const rect = (x, y, w, h, fill) =>
  `<rect x="${x}" y="${y}" width="${w}" height="${h}" fill="${fill}"/>`;
const frame = (x, y, w, h) =>
  rect(x, y, w, PX, "#fff") + rect(x, y + h - PX, w, PX, "#fff") +
  rect(x, y, PX, h, "#fff") + rect(x + w - PX, y, PX, h, "#fff");
const handle = (x, y, color) =>
  rect(x, y, 5 * PX, 5 * PX, color) + rect(x + PX, y + PX, 3 * PX, 3 * PX, "#fff");

function addLabel(parent, tagName, className, text, side, offset) {
  const el = document.createElement(tagName);
  el.className = className;
  el.textContent = text;
  el.style[side] = offset;
  parent.append(el);
}

function drawChart(root, c) {
  const [left, top, width, height] = c.box;
  const right = left + width;
  const bottom = top + height;
  const plotEnd = c.strip ? cell(c.strip) + PX : bottom;
  let out = frame(left, top, width, plotEnd - top);
  if (c.strip) out += frame(left, plotEnd + PX, width, bottom - plotEnd - PX);
  out += `<path d="M${left + PX} ${bottom - 6 * PX}v${5 * PX}h${5 * PX}z" fill="#778899"/>`;

  const clip = `clip-${root.dataset.chart}`;
  out += `<clipPath id="${clip}"><rect x="${left + PX}" y="${top + PX}" width="${width - 2 * PX}" height="${plotEnd - top - 2 * PX}"/></clipPath>`;

  for (const [color, points] of c.averages) {
    out += `<polyline clip-path="url(#${clip})" points="${points}" fill="none" stroke="${color}" stroke-width="${PX}"/>`;
  }
  for (const line of c.hlines) {
    const y = cell(line.y);
    out += rect(left + PX, y, width - 2 * PX, PX, "#ffd700");
    if (line.handles) {
      out += handle(left + PX, y - 2 * PX, "#ffd700") + handle(right - 6 * PX, y - 2 * PX, "#ffd700");
    }
    addLabel(root.querySelector(".price-tags"), "mark", "price-tag", line.label, "top", (y - top) / height * 100 + "%");
  }
  for (const line of c.vlines) {
    const x = cell(line.x);
    const at = (x - left) / width * 100 + "%";
    if (line.handles) {
      out += handle(x - 2 * PX, top + PX, "#ff0000") + handle(x - 2 * PX, plotEnd - 5 * PX, "#ff0000");
    }
    out += rect(x, top + PX, PX, bottom - top - 2 * PX, line.color);
    if (line.tag) addLabel(root.querySelector(".times"), "mark", "time-tag", line.tag, "left", at);
    if (line.note) addLabel(root.querySelector(".plot"), "span", "note", line.note, "left", at);
  }

  let bars = "";
  c.candles.trim().split(/\s+/).forEach((entry, i) => {
    if (entry === "-") return;
    const fill = FILL[entry[0]];
    const v = entry.slice(1).split(",").map(snap);
    const x = cell(c.x0 + i * c.step);
    const low = v[v.length - 1];
    bars += rect(x, v[0], PX, low - v[0], fill);
    if (v.length === 4) {
      bars += rect(x - (c.body - PX) / 2, v[1], c.body, v[2] - v[1], fill);
    }
  });
  out += `<g clip-path="url(#${clip})">${bars}</g>`;

  const svg = root.querySelector(".series");
  svg.setAttribute("viewBox", c.box.join(" "));
  svg.innerHTML = out;
}

document.querySelectorAll(".chart").forEach(el => drawChart(el, charts[el.dataset.chart]));
```
